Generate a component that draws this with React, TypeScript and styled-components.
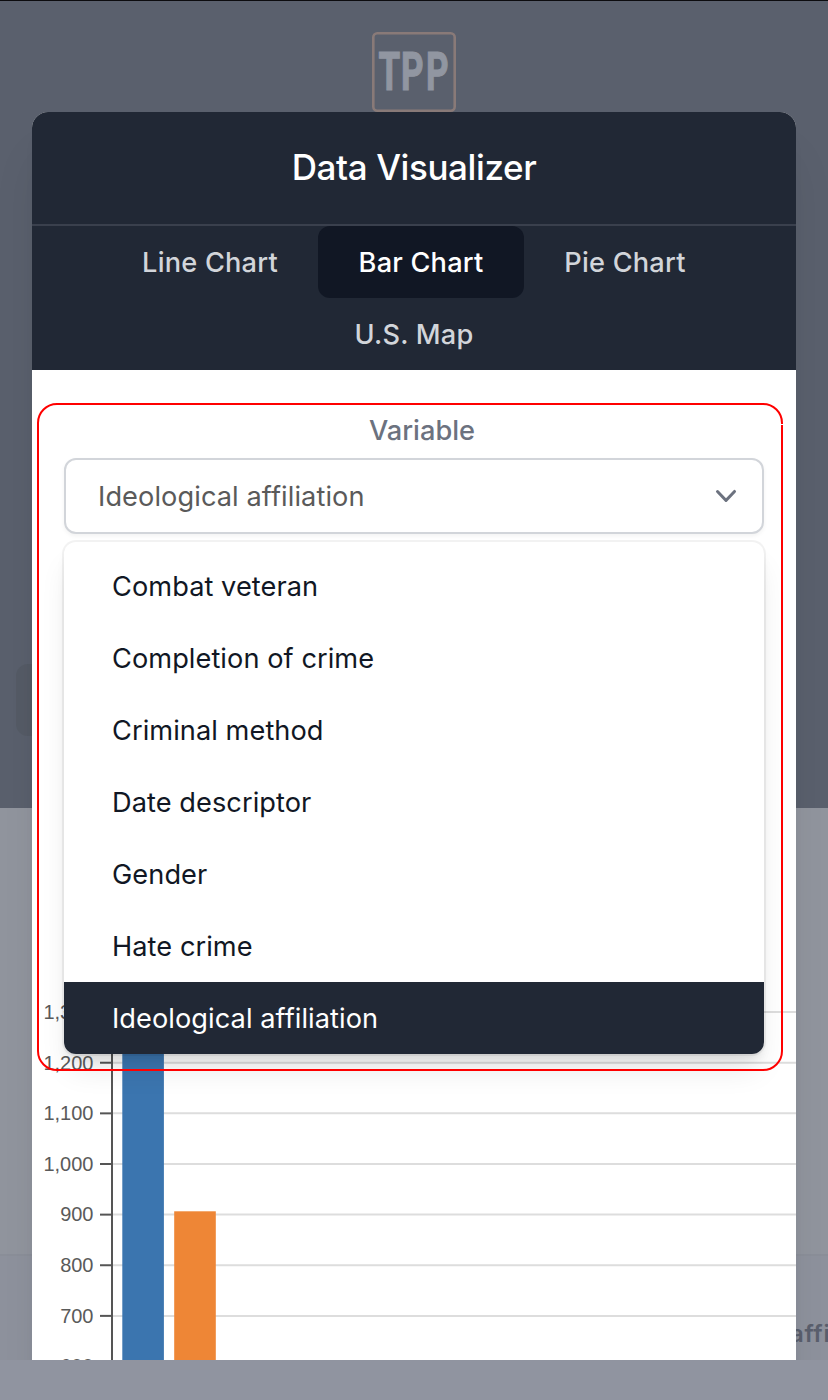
import React from 'react';
import styled, { createGlobalStyle } from 'styled-components';

const GlobalStyle = createGlobalStyle`
  *, *::before, *::after { box-sizing: border-box; }
  body { margin: 0; background: #9094a0; }
`;

const Page = styled.div`
  position: relative;
  width: 828px;
  height: 1400px;
  overflow: hidden;
  background: #9094a0;
  font-family: Inter, 'Liberation Sans', sans-serif;
`;

const Viewport = styled.div`
  position: relative;
  display: flex;
  flex-direction: column;
  height: 1360px;
  overflow: hidden;
`;

const Hero = styled.header`
  position: relative;
  flex: 0 0 808px;
  display: flex;
  justify-content: center;
  padding-top: 31px;
  border-top: 1px solid #0c0c0f;
  background: #5a606d;
`;

const Logo = styled.svg`
  display: block;
  width: 84px;
  height: 80px;
`;

const HeroButton = styled.div`
  position: absolute;
  left: 16px;
  top: 663px;
  width: 200px;
  height: 72px;
  border-radius: 12px;
  background: #555b66;
`;

const Backdrop = styled.section`
  flex: 0 0 446px;
  background: #91959e;
`;

const TableHead = styled.section`
  flex: 1;
  display: flex;
  align-items: flex-start;
  padding: 62px 0 0 790px;
  border-top: 2px solid #8b8f99;
  background: #8e929d;
  color: #5a5f6d;
  font-size: 24px;
  font-weight: 600;
  line-height: 32px;
  letter-spacing: 0.6px;
  white-space: nowrap;
`;

const Modal = styled.main`
  position: absolute;
  left: 32px;
  top: 112px;
  width: 764px;
  height: 1400px;
  border-radius: 16px;
  background: #fff;
  box-shadow: 0 40px 50px -10px rgba(0, 0, 0, 0.1), 0 16px 20px -12px rgba(0, 0, 0, 0.1);
`;

const ModalHeader = styled.div`
  display: flex;
  align-items: center;
  justify-content: center;
  height: 114px;
  padding-bottom: 2px;
  border-bottom: 2px solid #3a404d;
  border-radius: 16px 16px 0 0;
  background: #212835;
`;

const Title = styled.h1`
  margin: 0;
  color: #fff;
  font-size: 35px;
  font-weight: 500;
  line-height: 56px;
  letter-spacing: -0.4px;
`;

const Tabs = styled.nav`
  display: flex;
  flex-wrap: wrap;
  justify-content: center;
  background: #212835;
`;

const Tab = styled.button<{ $width: number; $active?: boolean }>`
  width: ${(p) => p.$width}px;
  height: 72px;
  padding: 1px 0 0;
  border: 0;
  border-radius: 12px;
  background: ${(p) => (p.$active ? '#111724' : 'transparent')};
  color: ${(p) => (p.$active ? '#fff' : '#d2d5da')};
  font: 500 27.2px/40px Inter, 'Liberation Sans', sans-serif;
  letter-spacing: 0.2px;
  white-space: nowrap;
`;

const Field = styled.div`
  position: relative;
  padding: 40px 32px 0;
`;

const Label = styled.label`
  display: block;
  height: 48px;
  padding-left: 16px;
  color: #6c727f;
  font-size: 27.2px;
  font-weight: 500;
  line-height: 41px;
  text-align: center;
`;

const Select = styled.div`
  display: flex;
  align-items: center;
  justify-content: space-between;
  height: 76px;
  padding: 0 16px 0 32px;
  border: 2px solid #d2d5da;
  border-radius: 12px;
  background: #fff;
  color: #5a5a5a;
  font-size: 27.2px;
  line-height: 40px;
  letter-spacing: 0.08px;
  box-shadow: 0 2px 4px rgba(0, 0, 0, 0.05);
`;

const SelectValue = styled.span`
  padding-top: 2px;
`;

const Chevron = styled.svg`
  width: 40px;
  height: 40px;
  fill: #6c727f;
`;

const Menu = styled.ul`
  position: absolute;
  z-index: 1;
  left: 32px;
  top: 172px;
  width: 700px;
  height: 512px;
  margin: 0;
  padding: 8px 0 0;
  overflow: hidden;
  list-style: none;
  border-radius: 12px;
  background: #fff;
  box-shadow: 0 0 0 2px rgba(0, 0, 0, 0.05), 0 20px 30px -6px rgba(0, 0, 0, 0.1),
    0 8px 12px -4px rgba(0, 0, 0, 0.1);
`;

const Option = styled.li<{ $selected?: boolean }>`
  height: 72px;
  padding: 16px 48px;
  background: ${(p) => (p.$selected ? '#212835' : 'transparent')};
  color: ${(p) => (p.$selected ? '#fff' : '#111724')};
  font-size: 27.2px;
  line-height: 41px;
  letter-spacing: 0.06px;
`;

const Highlight = styled.div`
  position: absolute;
  z-index: 2;
  left: 5px;
  top: 33px;
  width: 746px;
  height: 668px;
  border: 2px solid #f00;
  border-radius: 20px;
  &::after {
    content: '';
    position: absolute;
    right: -2px;
    top: 19px;
    width: 2px;
    height: 1px;
    background: #fff;
  }
`;

const ChartFrame = styled.div`
  margin: 286px -32px 0;
`;

const Chart = styled.svg`
  display: block;
  width: 764px;
  height: 540px;
  font-family: 'Liberation Sans', Arial, sans-serif;
  font-size: 20px;
`;

const options = [
  'Combat veteran',
  'Completion of crime',
  'Criminal method',
  'Date descriptor',
  'Gender',
  'Hate crime',
  'Ideological affiliation',
];

const ticks = ['1,300', '1,200', '1,100', '1,000', '900', '800', '700', '600'];

const tickY = (i: number) => 192.1 + i * 50.63;

function BarChart() {
  return (
    <ChartFrame>
      <Chart viewBox="0 0 764 540">
        {ticks.map((t, i) => (
          <line key={t} x1="80" x2="764" y1={tickY(i)} y2={tickY(i)} stroke="#ddd" strokeWidth="2" />
        ))}
        <rect x="90.3" y="178" width="41.6" height="362" fill="#3b75af" />
        <rect x="142.2" y="391.3" width="41.6" height="149" fill="#ee8636" />
        <line x1="80" x2="80" y1="178" y2="540" stroke="#555" strokeWidth="2" />
        {ticks.map((t, i) => (
          <g key={t}>
            <line x1="68" x2="80" y1={tickY(i)} y2={tickY(i)} stroke="#555" strokeWidth="2" />
            <text x="61.5" y={tickY(i) + 6.8} textAnchor="end" fill="#5a5a5a">{t}</text>
          </g>
        ))}
      </Chart>
    </ChartFrame>
  );
}

export default function App() {
  return (
    <Page>
      <GlobalStyle />
      <Viewport>
        <Hero>
          <Logo viewBox="0 0 84 80">
            <rect x="1.3" y="1.3" width="81.4" height="77.4" rx="4" fill="none" stroke="#897a78" strokeWidth="2.6" />
            <text
              transform="scale(0.66 1)"
              x="10 44 81.8"
              y="58.4"
              fill="#9196a1"
              stroke="#9196a1"
              strokeWidth="1.2"
              fontFamily="Roboto, sans-serif"
              fontWeight="700"
              fontSize="53"
            >
              TPP
            </text>
          </Logo>
          <HeroButton />
        </Hero>
        <Backdrop />
        <TableHead>affiliation</TableHead>

        <Modal>
          <ModalHeader>
            <Title>Data Visualizer</Title>
          </ModalHeader>
          <Tabs>
            <Tab $width={216}>Line Chart</Tab>
            <Tab $width={206} $active>Bar Chart</Tab>
            <Tab $width={202}>Pie Chart</Tab>
            <Tab $width={200}>U.S. Map</Tab>
          </Tabs>
          <Field>
            <Label>Variable</Label>
            <Select>
              <SelectValue>Ideological affiliation</SelectValue>
              <Chevron viewBox="0 0 20 20">
                <path d="M5.23 7.21a.75.75 0 011.06.02L10 11.168l3.71-3.938a.75.75 0 111.08 1.04l-4.25 4.5a.75.75 0 01-1.08 0l-4.25-4.5a.75.75 0 01.02-1.06z" />
              </Chevron>
            </Select>
            <Menu>
              {options.map((name) => (
                <Option key={name} $selected={name === 'Ideological affiliation'}>
                  {name}
                </Option>
              ))}
            </Menu>
            <Highlight />
            <BarChart />
          </Field>
        </Modal>
      </Viewport>
    </Page>
  );
}
